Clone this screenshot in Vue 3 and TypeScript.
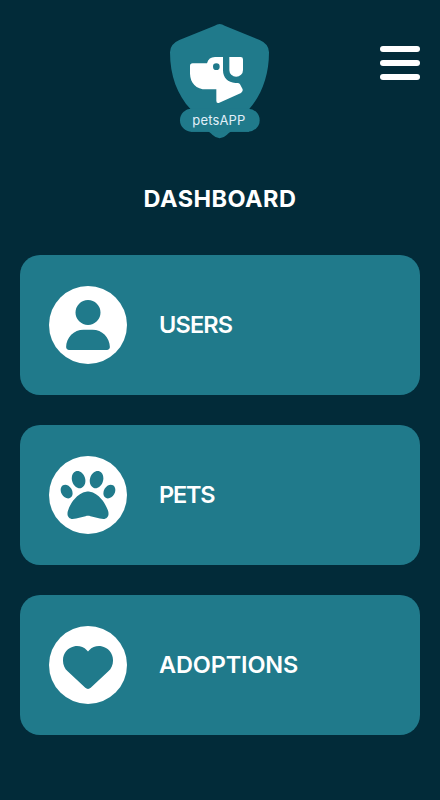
<script setup lang="ts">
interface MenuItem {
  label: string
  name: string
  viewBox: string
  path: string
}

const items: MenuItem[] = [
  {
    label: 'USERS',
    name: 'users',
    viewBox: '0 0 448 512',
    path: 'M224 256A128 128 0 1 0 224 0a128 128 0 1 0 0 256zm-45.7 48C79.8 304 0 383.8 0 482.3C0 498.7 13.3 512 29.7 512H418.3c16.4 0 29.7-13.3 29.7-29.7C448 383.8 368.2 304 269.7 304H178.3z',
  },
  {
    label: 'PETS',
    name: 'pets',
    viewBox: '-6 -6 524 524',
    path: 'M226.5 92.9c14.3 42.9-.3 86.2-32.6 96.8s-70.1-15.6-84.4-58.5s.3-86.2 32.6-96.8s70.1 15.6 84.4 58.5zM100.4 198.6c18.9 32.4 14.3 70.1-10.2 84.1s-59.7-.9-78.5-33.3S-2.7 179.3 21.8 165.3s59.7 .9 78.5 33.3zM69.2 401.2C121.6 259.9 214.7 224 256 224s134.4 35.9 186.8 177.2c3.6 9.7 5.2 20.1 5.2 30.5v1.6c0 25.8-20.9 46.7-46.7 46.7c-11.5 0-22.9-1.4-34-4.2l-88-22c-15.3-3.8-31.3-3.8-46.6 0l-88 22c-11.1 2.8-22.5 4.2-34 4.2C84.9 480 64 459.1 64 433.3v-1.6c0-10.4 1.6-20.8 5.2-30.5zM421.8 282.7c-24.5-14-29.1-51.7-10.2-84.1s54-47.3 78.5-33.3s29.1 51.7 10.2 84.1s-54 47.3-78.5 33.3zM310.1 189.7c-32.3-10.6-46.9-53.9-32.6-96.8s52.1-69.1 84.4-58.5s46.9 53.9 32.6 96.8s-52.1 69.1-84.4 58.5z',
  },
  {
    label: 'ADOPTIONS',
    name: 'adoptions',
    viewBox: '0 0 512 512',
    path: 'M47.6 300.4L228.3 469.1c7.5 7 17.4 10.9 27.7 10.9s20.2-3.9 27.7-10.9L464.4 300.4c30.4-28.3 47.6-68 47.6-109.5v-5.8c0-69.9-50.5-129.5-119.4-141C347 36.5 300.6 51.4 268 84L256 96 244 84c-32.6-32.6-79-47.5-124.6-39.9C50.5 55.6 0 115.2 0 185.1v5.8c0 41.5 17.2 81.2 47.6 109.5z',
  },
]
</script>

<template>
  <div class="screen">
    <header class="header">
      <svg class="logo" viewBox="0 0 360 390" role="img" aria-label="petsAPP">
        <path
          class="shield"
          d="M164 32Q179 22 194 32L299 75Q327 87 327 112C327 182 305 240 267 283V350H213C208 351 205 355 201 359Q179 380 157 359C153 355 150 351 145 350H92V283C52 240 30 182 30 112Q30 87 58 75Z"
        />
        <rect class="shield" x="60" y="281" width="239" height="69" rx="34.5" />
        <path
          class="dog"
          d="M189 126H165Q146 126 141 145H98Q90 145 90 153V176C91 204 108 223 139 223H169V257Q169 267 178 263L243 234Q250 230 248 223L240 208Q238 204 232 204H226C204 203 189 188 189 166Z"
        />
        <path class="dog" d="M208 126H242Q249 126 249 133V165A20.5 20.5 0 0 1 208 165Z" />
        <circle class="eye" cx="169" cy="155" r="10" />
        <text class="brand" x="97" y="330" textLength="159">petsAPP</text>
      </svg>
      <button class="menu" type="button" aria-label="Menu">
        <span class="bar"></span>
        <span class="bar"></span>
        <span class="bar"></span>
      </button>
    </header>
    <h1 class="title">DASHBOARD</h1>
    <nav class="cards">
      <a v-for="item in items" :key="item.name" class="card" :class="item.name">
        <span class="badge">
          <svg class="icon" :viewBox="item.viewBox"><path :d="item.path" /></svg>
        </span>
        <span class="label">{{ item.label }}</span>
      </a>
    </nav>
  </div>
</template>

<style>
body {
  margin: 0;
  background: #022b39;
}
</style>

<style scoped>
.screen {
  box-sizing: border-box;
  width: 100%;
  height: 800px;
  padding: 15px 20px 0;
  overflow: hidden;
  background: #022b39;
  color: #fff;
  font-family: Inter, "Liberation Sans", sans-serif;
}
.header {
  display: grid;
  grid-template-columns: 40px 1fr 40px;
  height: 130px;
}
.logo {
  grid-column: 2;
  justify-self: center;
  width: 120px;
  height: 130px;
}
.shield,
.eye {
  fill: #207a8b;
}
.dog {
  fill: #fff;
}
.brand {
  fill: #e2f0fa;
  font-size: 39px;
  font-weight: 400;
}
.menu {
  display: flex;
  flex-direction: column;
  gap: 8.4px;
  align-self: start;
  width: 40px;
  margin: 30.6px 0 0;
  padding: 0;
  border: 0;
  background: none;
}
.bar {
  height: 6px;
  border-radius: 3px;
  background: #fff;
}
.title {
  margin: 36px 0 0;
  height: 36px;
  line-height: 36px;
  font-size: 23.5px;
  font-weight: 700;
  letter-spacing: 0.45px;
  text-align: center;
}
.cards {
  display: flex;
  flex-direction: column;
  gap: 30px;
  margin-top: 38px;
}
.card {
  box-sizing: border-box;
  display: flex;
  align-items: center;
  gap: 32px;
  height: 140px;
  padding-left: 29px;
  border-radius: 20px;
  background: #207a8b;
}
.badge {
  display: flex;
  align-items: center;
  justify-content: center;
  width: 78px;
  height: 78px;
  border-radius: 50%;
  background: #fff;
}
.icon {
  height: 50px;
  fill: #207a8b;
}
.users .icon {
  width: 44px;
}
.pets .icon {
  width: 56px;
  height: 56px;
}
.adoptions .icon {
  margin-top: 4px;
}
.label {
  font-size: 23.5px;
  font-weight: 600;
  line-height: 36px;
  letter-spacing: -0.15px;
}
.users .label {
  letter-spacing: -0.85px;
}
.pets .label {
  letter-spacing: -1.2px;
}
</style>
